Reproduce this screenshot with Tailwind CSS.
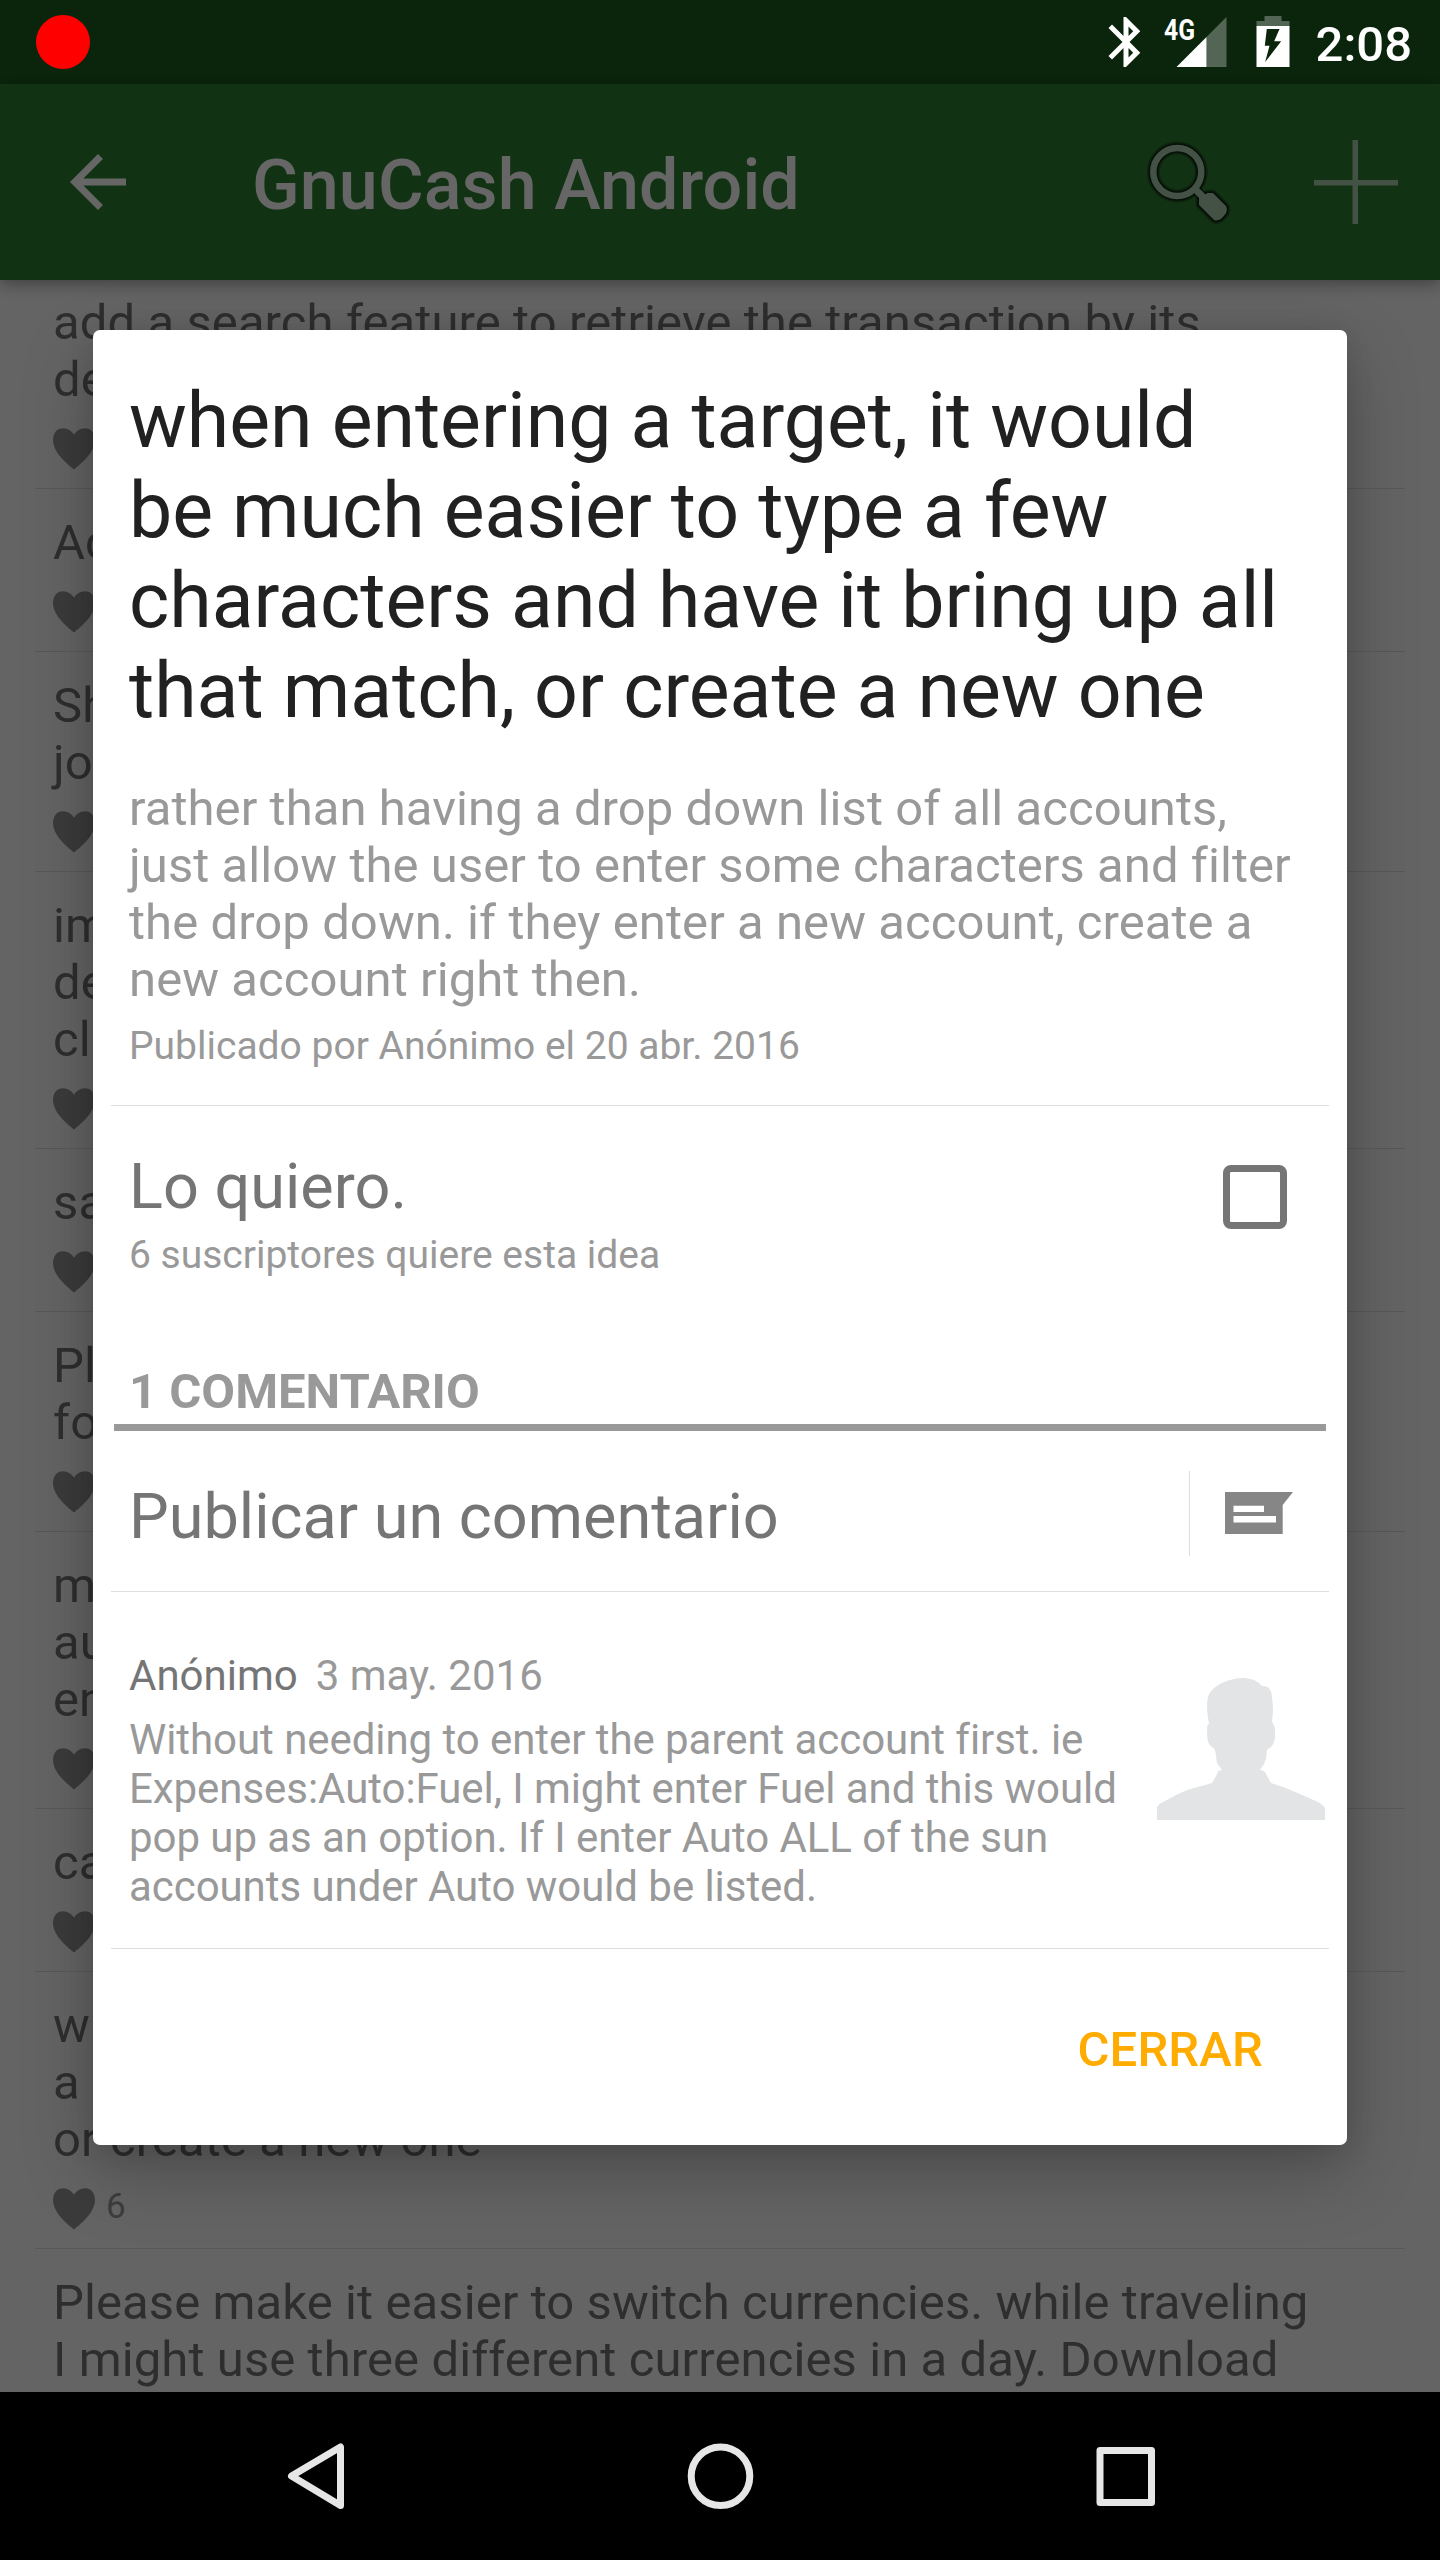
<!DOCTYPE html>
<html lang="es">
<head>
<meta charset="utf-8">
<title>GnuCash Android</title>
<script src="https://cdn.jsdelivr.net/npm/@tailwindcss/browser@4"></script>
</head>
<body class="bg-black font-[Roboto,sans-serif]">
<svg class="hidden">
  <symbol id="heart" viewBox="0 0 42 42"><path d="M21 41.5C13 35 0 24 0 12 0 5 4 .3 10 .3c5 0 9 3 11 6.500C23 3.300 27 .3 32 .3c6 0 10 4.700 10 11.700 0 12-13 23-21 29.500z" fill="#959595"/></symbol>
</svg>
<div class="relative flex h-[2560px] w-[1440px] flex-col overflow-hidden whitespace-nowrap">

  <!-- app screen -->
  <div class="h-[84px] shrink-0 bg-[#1b5e20]"></div>
  <header class="relative z-10 flex h-[196px] shrink-0 items-center bg-[#2e7d32] pl-14 shadow-[0_3px_16px_rgba(0,0,0,0.4)]">
    <svg class="size-[84px]" viewBox="0 0 24 24" fill="#fff"><path d="M20 11H7.830l5.590-5.590L12 4l-8 8 8 8 1.410-1.410L7.830 13H20z"/></svg>
    <h1 class="ml-28 mt-1.5 text-[70px] font-medium leading-[82px] tracking-[0.1px] text-white">GnuCash Android</h1>
    <svg class="ml-auto mr-[82px] h-[84px] w-[88px]" viewBox="1144 140 88 84">
      <g fill="none" stroke="#000" stroke-opacity=".3" stroke-linejoin="round"><circle cx="1177.300" cy="172" r="24" stroke-width="13"/><path d="M1207.500 193h5.500l13 13q2 4-.5 8l-4 4.500q-4 3-7.500 1.500l-15-15v-6.500z" stroke-width="7"/></g>
      <g fill="#000" stroke="#000" stroke-opacity=".55" stroke-linejoin="round"><circle cx="1177.300" cy="172" r="24" fill="none" stroke-width="9.500"/><path d="M1194 188l12 12" stroke-width="10"/><path d="M1207.500 193h5.500l13 13q2 4-.5 8l-4 4.500q-4 3-7.500 1.500l-15-15v-6.500z" stroke-width="3.500"/></g>
      <g fill="#abcaad"><circle cx="1177.300" cy="172" r="24" fill="none" stroke="#abcaad" stroke-width="6.500"/><path d="M1194 188l10 10" stroke="#abcaad" stroke-width="7"/><path d="M1207.500 193h5.500l13 13q2 4-.5 8l-4 4.500q-4 3-7.500 1.500l-15-15v-6.500z"/></g>
    </svg>
    <svg class="mr-[42px] size-[84px] opacity-60" viewBox="0 0 84 84" fill="#fff"><path d="M38.500 0h5.500v40h40v5.500H44V84h-5.500V45.500H0V40h38.500z"/></svg>
  </header>

  <main class="h-[2112px] shrink-0 overflow-hidden bg-[#fafafa] px-[35px] text-[49px] leading-[57px] tracking-[0.09px] text-[#737373]">
    <div class="-mt-[11px]">
      <div class="border-b border-[#dcdcdc] px-[18px] pb-[18px] pt-[25px]"><p>add a search feature to retrieve the transaction by its<br>de</p><svg class="mt-5 size-[42px]"><use href="#heart"/></svg></div>
      <div class="border-b border-[#dcdcdc] px-[18px] pb-[18px] pt-[25px]"><p>Ac</p><svg class="mt-5 size-[42px]"><use href="#heart"/></svg></div>
      <div class="border-b border-[#dcdcdc] px-[18px] pb-[18px] pt-[25px]"><p>Sh<br>jo</p><svg class="mt-5 size-[42px]"><use href="#heart"/></svg></div>
      <div class="border-b border-[#dcdcdc] px-[18px] pb-[18px] pt-[25px]"><p>im<br>de<br>cl</p><svg class="mt-5 size-[42px]"><use href="#heart"/></svg></div>
      <div class="border-b border-[#dcdcdc] px-[18px] pb-[18px] pt-[25px]"><p>sa</p><svg class="mt-5 size-[42px]"><use href="#heart"/></svg></div>
      <div class="border-b border-[#dcdcdc] px-[18px] pb-[18px] pt-[25px]"><p>Pl<br>fo</p><svg class="mt-5 size-[42px]"><use href="#heart"/></svg></div>
      <div class="border-b border-[#dcdcdc] px-[18px] pb-[18px] pt-[25px]"><p>m<br>au<br>en</p><svg class="mt-5 size-[42px]"><use href="#heart"/></svg></div>
      <div class="border-b border-[#dcdcdc] px-[18px] pb-[18px] pt-[25px]"><p>ca</p><svg class="mt-5 size-[42px]"><use href="#heart"/></svg></div>
      <div class="border-b border-[#dcdcdc] px-[18px] pb-[18px] pt-[25px]"><p>w<br>a<br>or create a new one</p><div class="mt-5 flex h-[42px] items-start gap-[11px]"><svg class="size-[42px]"><use href="#heart"/></svg><span class="-mt-[2px] text-[35px] leading-[41px] text-[#999]">6</span></div></div>
      <div class="px-[18px] pt-[25px]"><p>Please make it easier to switch currencies. while traveling<br>I might use three different currencies in a day. Download</p></div>
    </div>
  </main>

  <!-- scrim -->
  <div class="absolute inset-x-0 top-0 z-20 h-[2392px] bg-black/60"></div>

  <!-- status icons -->
  <div class="absolute inset-x-0 top-0 z-30 flex h-[84px] items-start">
    <div class="ml-9 mt-[15px] size-[54px] rounded-full bg-[#f00]"></div>
    <svg class="ml-auto h-[84px] w-[190px]" viewBox="1101.500 0 190 84">
      <path transform="translate(1096.500 12) scale(2.500)" d="M17.710 7.710L12 2h-1v7.590L6.410 5 5 6.410 10.590 12 5 17.590 6.410 19 11 14.410V22h1l5.710-5.710-4.300-4.290 4.300-4.290zM13 5.830l1.880 1.880L13 9.590V5.830zm1.880 10.460L13 18.170v-3.760l1.880 1.880z" fill="#fff"/>
      <path d="M1227 17v50h-20V37z" fill="#fff" fill-opacity=".3"/>
      <path d="M1207 37v30h-30z" fill="#fff"/>
      <text x="1164.500" y="39.500" font-size="30" font-weight="700" textLength="31" lengthAdjust="spacingAndGlyphs" fill="#fff">4G</text>
      <path d="M1265 16h17v5h8v5h-33v-5h8z" fill="#fff" fill-opacity=".3"/>
      <path fill-rule="evenodd" d="M1257 26h33v41h-33zM1267.300 29l-2 16.700h4.700L1265.700 62l16-20.700h-7L1280 29z" fill="#fff"/>
    </svg>
    <span class="ml-[25px] mr-[28px] mt-4 text-[49px] font-medium leading-[57px] text-white">2:08</span>
  </div>

  <!-- dialog -->
  <section class="absolute left-[93px] top-[330px] z-30 flex h-[1815px] w-[1254px] flex-col rounded-[7px] bg-white px-[18px] pt-[46px] shadow-[0_26px_70px_rgba(0,0,0,0.25),0_4px_28px_rgba(0,0,0,0.1)]">
    <h2 class="px-[18px] text-[77px] leading-[90px] tracking-[-0.02px] text-[#212121]">when entering a target, it would<br>be much easier to type a few<br>characters and have it bring up all<br>that match, or create a new one</h2>
    <p class="mt-11 px-[18px] text-[49px] leading-[57px] tracking-[0.07px] text-[#999]">rather than having a drop down list of all accounts,<br>just allow the user to enter some characters and filter<br>the drop down. if they enter a new account, create a<br>new account right then.</p>
    <p class="mt-4 px-[18px] text-[39px] leading-[45px] text-[#999]">Publicado por Anónimo el 20 abr. 2016</p>
    <div class="mt-9 h-px bg-[#dedede]"></div>

    <div class="flex items-start justify-between pl-[18px] pr-[42px] pt-11">
      <div>
        <p class="text-[63px] leading-[73px] text-[#757575]">Lo quiero.</p>
        <p class="mt-2.5 text-[39px] leading-[45px] text-[#999]">6 suscriptores quiere esta idea</p>
      </div>
      <div class="mt-[15px] size-16 rounded-[8px] border-[7px] border-[#757575]"></div>
    </div>

    <h3 class="mx-[3px] mt-[85px] border-b-[7px] border-[#999] px-[15px] pb-1 text-[49px] font-bold leading-[57px] text-[#999]">1 COMENTARIO</h3>

    <div class="flex h-[161px] items-start border-b border-[#dedede] pl-[18px]">
      <p class="mt-[49px] text-[63px] leading-[73px] text-[#757575]">Publicar un comentario</p>
      <div class="ml-auto mt-10 h-[85px] w-px bg-[#dedede]"></div>
      <svg class="ml-[35px] mr-9 mt-[61px] h-[42px] w-[68px]" viewBox="0 0 68 42"><path d="M0 0h68L57.700 13v29H0z" fill="#868686"/><path d="M8.500 13.700H39V20H8.500zM8.500 24H51v6.500H8.500z" fill="#fff"/></svg>
    </div>

    <div class="flex h-[357px] items-start border-b border-[#dedede] pl-[18px] pr-1">
      <div class="pt-[59px] text-[42px] leading-[49px] text-[#999]">
        <p class="flex gap-[18px]"><span class="text-[#757575]">Anónimo</span><span>3 may. 2016</span></p>
        <p class="mt-[15px] tracking-[-0.06px]">Without needing to enter the parent account first. ie<br>Expenses:Auto:Fuel, I might enter Fuel and this would<br>pop up as an option. If I enter Auto ALL of the sun<br>accounts under Auto would be listed.</p>
      </div>
      <svg class="ml-auto mt-[86px] h-[142px] w-[168px]" viewBox="0 0 168 142" fill="#e3e4e5"><path d="M0 142v-13q3-4 8-6 10-6 22-11l25-7q2-3 3.500-6l3-6 3.500-1-5-7-1.500-11q-1-4-3.500-5-4-3-4.500-8-1-8 0-14l1.500-1Q50 34 50 29q0-6 1-10 2-7 9-11 5-4 13-6 6-2 13-2 8 .5 12 2.500 4 2 7 5.500 5 0 7 2 3 4 3 9 1 7 1 14l-1 11q3 4 3 7v9q-1 5-3 8l-5 4-1 9-2 5-4 6q3 .5 5 2 3 6 6 11 10 3 22 8l25 11q4 2 7 6v12z"/></svg>
    </div>

    <div class="flex justify-end pr-[66px] pt-[72px]">
      <button class="text-[49px] font-medium leading-[57px] tracking-[0.15px] text-[#ffab00]">CERRAR</button>
    </div>
  </section>

  <!-- navigation bar -->
  <nav class="flex h-[168px] shrink-0 items-center justify-center bg-black">
    <svg class="h-[168px] w-[1440px]" viewBox="0 2392 1440 168" fill="none" stroke="#e6e6e6" stroke-width="7" stroke-linejoin="round">
      <path d="M340.500 2447v58.500L291.500 2476z"/>
      <circle cx="720.500" cy="2476.300" r="29.300"/>
      <rect x="1100" y="2450.500" width="51.500" height="52"/>
    </svg>
  </nav>
</div>
</body>
</html>
